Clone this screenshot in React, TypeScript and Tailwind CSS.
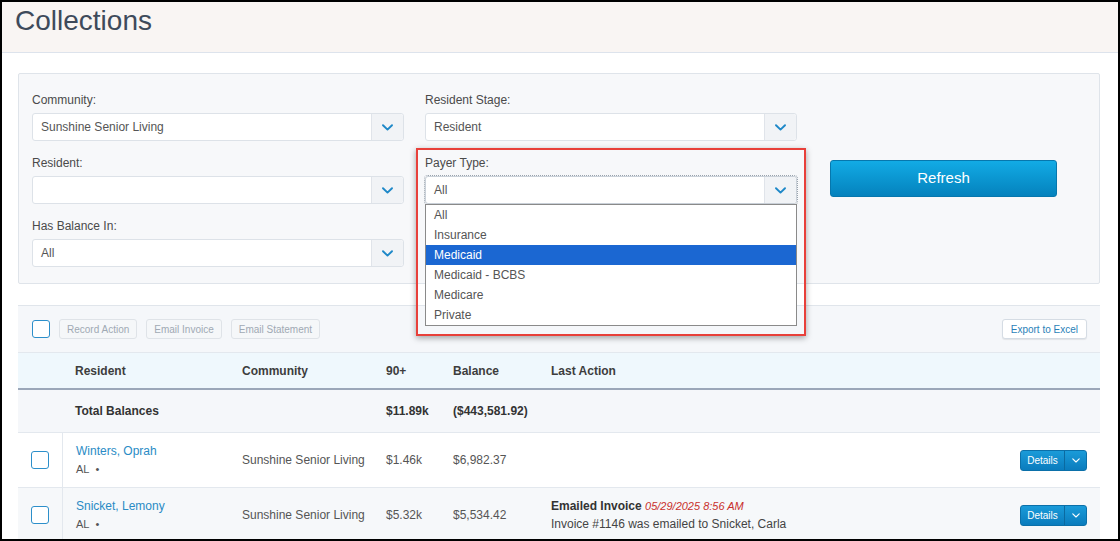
import React from "react";

const Chevron = ({ color = "#1e88c8", w = 11, h = 7, sw = 1.9 }: { color?: string; w?: number; h?: number; sw?: number }) => (
  <svg width={w} height={h} viewBox="0 0 11 7" fill="none">
    <path d="M1 1.2 L5.5 5.6 L10 1.2" stroke={color} strokeWidth={sw} strokeLinecap="round" strokeLinejoin="round" />
  </svg>
);

const Select = ({ value, focus }: { value: string; focus?: boolean }) => (
  <div
    className={
      "flex h-[28px] w-[372px] bg-white border rounded-[3px] " +
      (focus ? "border-[#c9d0d8] outline-1 outline-dotted outline-[#9aa3ad]" : "border-[#dde2e8]")
    }
  >
    <div className="flex-1 flex items-center pl-[8px] text-[12px] text-[#555]">{value}</div>
    <div className="w-[32px] flex items-center justify-center bg-[#f1f3f6] border-l border-[#e0e4ea] rounded-r-[3px]">
      <Chevron />
    </div>
  </div>
);

const Field = ({ label, value, focus, children }: { label: string; value: string; focus?: boolean; children?: React.ReactNode }) => (
  <div className="mb-[14px]">
    <div className="h-[16px] leading-[16px] mb-[5px] text-[12px] text-[#4a4a4a]">{label}</div>
    <div className="relative">
      <Select value={value} focus={focus} />
      {children}
    </div>
  </div>
);

const Checkbox = () => (
  <div className="w-[18px] h-[18px] bg-white border-[1.5px] border-[#2c8fca] rounded-[3px]" />
);

const ToolBtn = ({ label }: { label: string }) => (
  <div className="h-[20px] px-[7px] flex items-center border border-[#dfe3e8] bg-[#f5f7f9] rounded-[3px] text-[10px] text-[#a0a9b4]">
    {label}
  </div>
);

const DetailsBtn = () => (
  <div className="flex h-[21px] rounded-[3px] border border-[#0b70a9] bg-gradient-to-b from-[#1a9bd9] to-[#0a7cbd] text-white">
    <div className="w-[44px] flex items-center justify-center text-[10px] border-r border-[#0b6aa0]">Details</div>
    <div className="w-[21px] flex items-center justify-center">
      <Chevron color="#ffffff" w={8} h={5} sw={1.6} />
    </div>
  </div>
);

const options = ["All", "Insurance", "Medicaid", "Medicaid - BCBS", "Medicare", "Private"];

export default function App() {
  return (
    <div className="relative w-[1120px] h-[541px] overflow-hidden border-2 border-black bg-white font-['Liberation_Sans',Arial,sans-serif]">
      {/* Header */}
      <div className="h-[51px] bg-[#f9f5f3] border-b border-[#dde3ec] pl-[13px] pt-[3px]">
        <div className="text-[28px] leading-[32px] text-[#3e4a5b]">Collections</div>
      </div>

      <div className="pl-[16px] pr-[18px]">
        {/* Filter panel */}
        <div className="mt-[20px] h-[211px] bg-[#f7f8fa] border border-[#dfe4ea] rounded-[2px] pl-[13px] pt-[18px] flex">
          <div className="w-[372px]">
            <Field label="Community:" value="Sunshine Senior Living" />
            <Field label="Resident:" value="" />
            <Field label="Has Balance In:" value="All" />
          </div>
          <div className="w-[372px] ml-[21px]">
            <Field label="Resident Stage:" value="Resident" />
            <Field label="Payer Type:" value="All" focus>
              <div className="absolute left-0 top-full w-[372px] z-10 bg-white border border-[#8a8a8a]">
                {options.map((o) => (
                  <div
                    key={o}
                    className={
                      "h-[20px] flex items-center pl-[8px] text-[12px] " +
                      (o === "Medicaid" ? "bg-[#1b67d2] text-white" : "text-[#555]")
                    }
                  >
                    {o}
                  </div>
                ))}
              </div>
            </Field>
          </div>
          <div className="ml-[33px] mt-[68px]">
            <div className="w-[227px] h-[37px] flex items-center justify-center rounded-[3px] border border-[#0677ad] bg-gradient-to-b from-[#12abe5] to-[#0582bd] text-white text-[15px]">
              Refresh
            </div>
          </div>
        </div>

        {/* Table */}
        <div className="mt-[21px] border-t border-[#e0e5eb]">
          <div className="h-[47px] bg-[#f5f7fa] border-b border-[#e3e8ee] flex items-center pl-[14px] pr-[13px]">
            <Checkbox />
            <div className="ml-[9px] flex gap-[9px]">
              <ToolBtn label="Record Action" />
              <ToolBtn label="Email Invoice" />
              <ToolBtn label="Email Statement" />
            </div>
            <div className="ml-auto h-[20px] px-[8px] flex items-center bg-white border border-[#d5dce4] rounded-[3px] shadow-[0_1px_1px_rgba(0,0,0,0.08)] text-[10px] text-[#2a7fb8]">
              Export to Excel
            </div>
          </div>

          <div className="grid grid-cols-[44px_180px_144px_67px_98px_1fr_auto] h-[37px] bg-[#eff8fd] border-b-2 border-[#9ba7b9] items-center text-[12px] font-bold text-[#3d3d3d]">
            <div />
            <div className="pl-[13px]">Resident</div>
            <div>Community</div>
            <div>90+</div>
            <div>Balance</div>
            <div>Last Action</div>
            <div />
          </div>

          <div className="grid grid-cols-[44px_180px_144px_67px_98px_1fr_auto] h-[43px] bg-[#f5f7fa] border-b border-[#e3e8ee] items-center text-[12px] font-bold text-[#333]">
            <div />
            <div className="pl-[13px]">Total Balances</div>
            <div />
            <div>$11.89k</div>
            <div>($443,581.92)</div>
            <div />
            <div />
          </div>

          <div className="grid grid-cols-[44px_180px_144px_67px_98px_1fr_auto] h-[55px] bg-white border-b border-[#e3e8ee] items-center text-[12px] text-[#555]">
            <div className="flex justify-center"><Checkbox /></div>
            <div className="pl-[13px] h-full flex flex-col justify-center border-l border-[#e3e8ee]">
              <div className="text-[#2a8bc5] leading-[18px]">Winters, Oprah</div>
              <div className="text-[11px] leading-[18px] text-[#555]">AL&nbsp; •</div>
            </div>
            <div>Sunshine Senior Living</div>
            <div>$1.46k</div>
            <div>$6,982.37</div>
            <div />
            <div className="pr-[13px]"><DetailsBtn /></div>
          </div>

          <div className="grid grid-cols-[44px_180px_144px_67px_98px_1fr_auto] h-[55px] bg-[#f6f8fa] border-b border-[#e3e8ee] items-center text-[12px] text-[#555]">
            <div className="flex justify-center"><Checkbox /></div>
            <div className="pl-[13px] h-full flex flex-col justify-center border-l border-[#e3e8ee]">
              <div className="text-[#2a8bc5] leading-[18px]">Snicket, Lemony</div>
              <div className="text-[11px] leading-[18px] text-[#555]">AL&nbsp; •</div>
            </div>
            <div>Sunshine Senior Living</div>
            <div>$5.32k</div>
            <div>$5,534.42</div>
            <div className="flex flex-col justify-center">
              <div className="leading-[18px]">
                <span className="font-bold text-[#333]">Emailed Invoice</span>{" "}
                <span className="italic text-[11px] text-[#c9302c]">05/29/2025 8:56 AM</span>
              </div>
              <div className="leading-[18px] text-[#444]">Invoice #1146 was emailed to Snicket, Carla</div>
            </div>
            <div className="pr-[13px]"><DetailsBtn /></div>
          </div>
        </div>
      </div>

      {/* Red highlight box */}
      <div className="absolute left-[414px] top-[146px] w-[390px] h-[188px] border-2 border-[#e8403a] shadow-[0_2px_6px_rgba(0,0,0,0.35)] pointer-events-none z-20" />
    </div>
  );
}
